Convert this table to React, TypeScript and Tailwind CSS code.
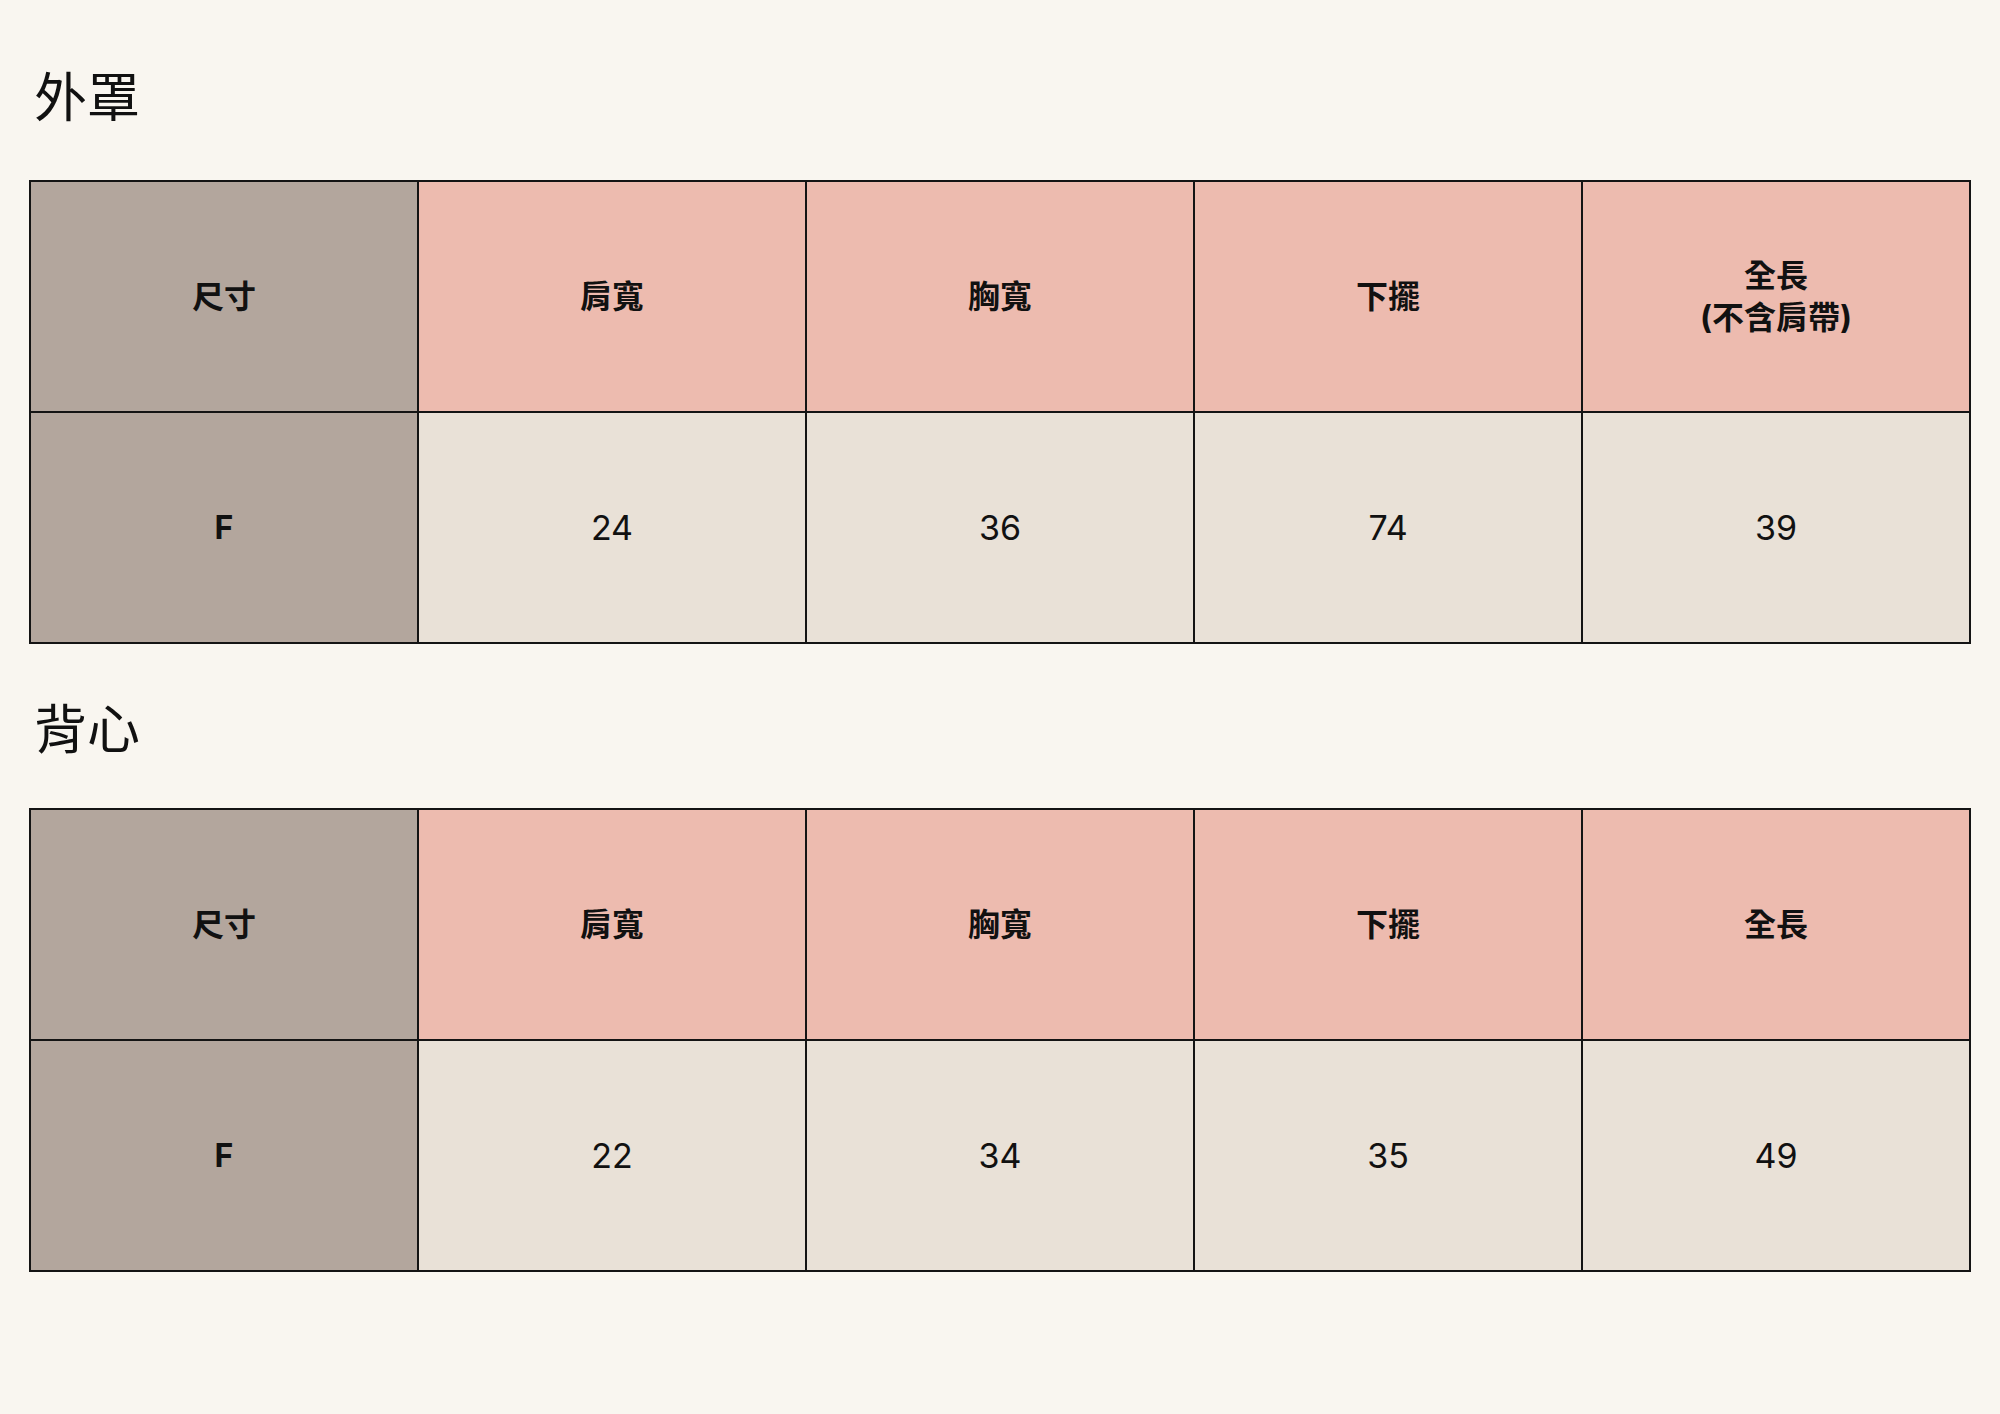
import React from "react";

type Section = {
  title: string;
  headers: string[][];
  values: string[];
};

const sections: Section[] = [
  {
    title: "外罩",
    headers: [["肩寬"], ["胸寬"], ["下擺"], ["全長", "(不含肩帶)"]],
    values: ["24", "36", "74", "39"],
  },
  {
    title: "背心",
    headers: [["肩寬"], ["胸寬"], ["下擺"], ["全長"]],
    values: ["22", "34", "35", "49"],
  },
];

function SizeTable({ section }: { section: Section }) {
  return (
    <table className="w-full table-fixed border-collapse border-2 border-[#141414]">
      <tbody>
        <tr className="h-[231px]">
          <th className="border-2 border-[#141414] bg-[#b3a69d] text-[32px] font-bold leading-[42px] text-[#111]">
            尺寸
          </th>
          {section.headers.map((lines, i) => (
            <th
              key={i}
              className="border-2 border-[#141414] bg-[#edbbaf] text-[32px] font-bold leading-[42px] text-[#111]"
            >
              {lines.map((l) => (
                <div key={l}>{l}</div>
              ))}
            </th>
          ))}
        </tr>
        <tr className="h-[231px]">
          <td className="border-2 border-[#141414] bg-[#b3a69d] text-center text-[32px] font-bold text-[#111]">
            F
          </td>
          {section.values.map((v, i) => (
            <td
              key={i}
              className="border-2 border-[#141414] bg-[#e9e1d7] text-center text-[34px] text-[#111]"
            >
              {v}
            </td>
          ))}
        </tr>
      </tbody>
    </table>
  );
}

export default function App() {
  return (
    <div
      className="min-h-[1414px] w-[2000px] bg-[#f9f6f0] px-[29px] text-[#111]"
      style={{ fontFamily: 'Inter, "Noto Sans CJK TC", sans-serif' }}
    >
      <h2 className="pl-[5px] pt-[66px] pb-[50px] text-[53px] leading-[64px] font-normal">外罩</h2>
      <SizeTable section={sections[0]} />
      <h2 className="pl-[5px] pt-[54px] pb-[46px] text-[53px] leading-[64px] font-normal">背心</h2>
      <SizeTable section={sections[1]} />
    </div>
  );
}
